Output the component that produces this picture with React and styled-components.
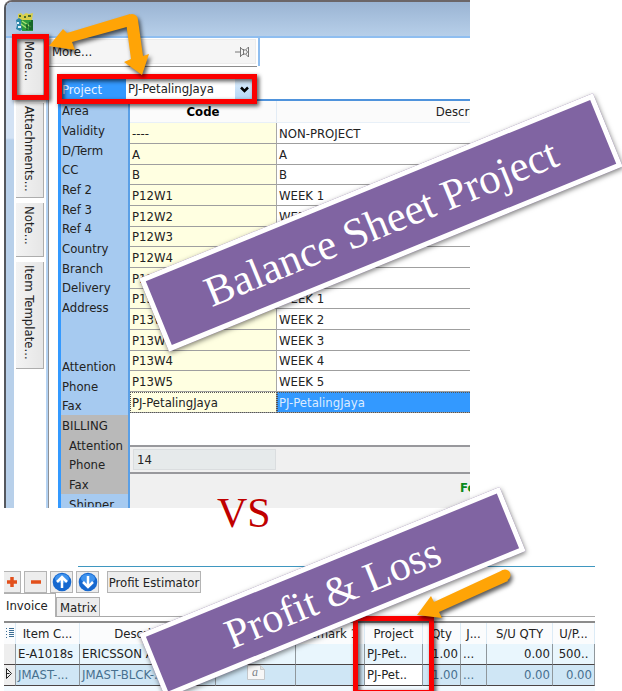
import React from "react";
import styled, { createGlobalStyle } from "styled-components";

const Global = createGlobalStyle`
  * { box-sizing: border-box; }
  body {
    margin: 0;
    background: #fff;
    color: #222;
    font-family: "DejaVu Sans Condensed", "DejaVu Sans", sans-serif;
    font-size: 13px;
  }
  button, select { font: inherit; color: inherit; margin: 0; padding: 0; }
`;

const Page = styled.main`
  position: relative;
  overflow: hidden;
`;

/* ---------- Upper window ---------- */

const Window = styled.section`
  margin: 0 152px 0 4px;
  border-top: 2px solid #6b6668;
  border-left: 2px solid #55585e;
  border-top-left-radius: 8px;
  overflow: hidden;
`;

const TitleBar = styled.header`
  display: flex;
  align-items: center;
  height: 36px;
  padding-left: 9px;
  padding-top: 5px;
  background: linear-gradient(#9ab4d3, #b7cfe9);
  border-bottom: 2px solid #8fbef0;
`;

const WindowBody = styled.div`
  display: flex;
`;

const Frame = styled.div`
  width: 8px;
  flex: none;
  background: linear-gradient(#d3e2f4 0 100px, #b8d0ea 102px);
`;

const SideTabs = styled.nav`
  display: flex;
  flex-direction: column;
  gap: 5px;
  flex: none;
  width: 35px;
  padding-left: 2px;
  border-right: 1px solid #8c9096;
  box-shadow: inset -2px 0 #b4d2f2;
`;

const SideTab = styled.button`
  writing-mode: vertical-rl;
  width: 28px;
  height: ${(p) => p.$length}px;
  padding-top: 3px;
  border: 0 solid #adadad;
  border-width: 0 1px 1px 0;
  background: linear-gradient(90deg, #f3f3f3, #e6e6e6);
  text-align: left;
  line-height: 27px;
  white-space: nowrap;
`;

const Content = styled.div`
  flex: 1;
  min-width: 0;
`;

const PanelHeader = styled.div`
  width: 211px;
  height: 28px;
  padding: 1px 2px 1px 1px;
  border-right: 2px solid #8fbef0;
`;

const PanelTitle = styled.div`
  display: flex;
  align-items: center;
  justify-content: space-between;
  height: 25px;
  padding: 0 5px 0 1px;
  background: #f5f5f5;
  border: 1px solid #ececec;
`;

const PanelRule = styled.hr`
  width: 208px;
  height: 1px;
  margin: 0 0 11px;
  border: 0;
  background: #8c8c8c;
`;

const FieldRow = styled.div`
  display: flex;
  height: 21px;
  width: 196px;
  margin-left: 9px;
  border-top: 1px dotted #222;
`;

const FieldLabel = styled.label`
  width: 68px;
  padding-left: 4px;
  background: #3399ff;
  color: #e8f3ff;
  line-height: 22px;
`;

const Combo = styled.div`
  display: flex;
  position: relative;
  flex: 1;
`;

const ComboSelect = styled.select`
  appearance: none;
  width: 100%;
  border: 0;
  padding-left: 2px;
  background: #fff;
  line-height: 20px;
`;

const ComboArrow = styled.span`
  position: absolute;
  right: 0;
  top: 0;
  display: grid;
  place-items: center;
  width: 19px;
  height: 20px;
  background: linear-gradient(#dcecfb, #b5d8f7);
  pointer-events: none;
`;

const Split = styled.div`
  display: flex;
  margin-left: 9px;
`;

const LabelList = styled.ul`
  flex: none;
  width: 72px;
  margin: 0;
  padding: 1px 0 0;
  list-style: none;
  background: #a6caf0;
  border-left: 3px solid #3399ff;
  border-right: 2px solid #5a9fe6;
`;

const LabelItem = styled.li`
  height: 20px;
  padding-left: ${(p) => (p.$indent ? 8 : 1)}px;
  line-height: 21px;
  overflow: hidden;
  white-space: nowrap;
  background: ${(p) => (p.$group ? "#b9b9b9" : "transparent")};
  &:nth-child(3n) { height: 19px; }
  &:last-child { height: 13px; }
`;

const GridPane = styled.div`
  flex: 1;
  min-width: 0;
  overflow: hidden;
  border-top: 2px solid #4f93dc;
`;

const CodeTable = styled.table`
  width: calc(100% + 192px);
  table-layout: fixed;
  border-collapse: separate;
  border-spacing: 0;
`;

const CodeHead = styled.th`
  width: ${(p) => p.$width || "auto"};
  height: 22px;
  padding: 0;
  background: #fbfbfb;
  border-right: 1px solid #e3ecf5;
  border-bottom: 1px solid #e8f0f8;
  font-weight: ${(p) => (p.$strong ? 700 : 400)};
  color: ${(p) => (p.$strong ? "#000" : "#222")};
`;

const CodeRow = styled.tr`
  height: 21px;
  &:nth-child(3n) { height: 20px; }
`;

const CodeCell = styled.td`
  height: inherit;
  padding: 1px 2px 0;
  line-height: 18px;
  white-space: nowrap;
  border-bottom: 1px solid #9f9f9f;
  border-right: 1px solid #a8a8a8;
  background: ${(p) => (p.$code ? "#ffffe1" : p.$picked ? "#3399ff" : "#fff")};
  color: ${(p) => (p.$picked && !p.$code ? "#dcecff" : "inherit")};
  outline: ${(p) => (p.$picked ? "1px dotted #555" : "none")};
  outline-offset: -1px;
`;

const CountBar = styled.div`
  height: 29px;
  margin-top: 32px;
  padding: 2px 3px;
  background: #f0f0f0;
  border: 0 solid #98989c;
  border-width: 2px 0;
`;

const Count = styled.output`
  display: block;
  width: 143px;
  height: 21px;
  padding-left: 3px;
  line-height: 19px;
  background: #e6eaeb;
  border: 1px solid #dadddf;
`;

const StatusBar = styled.footer`
  display: flex;
  justify-content: flex-end;
  height: 34px;
  background: #f0f0f0;
`;

const Status = styled.strong`
  width: 10px;
  color: #0a8a1c;
  line-height: 28px;
  overflow: hidden;
  white-space: nowrap;
`;

/* ---------- Lower window ---------- */

const Invoice = styled.section`
  margin: 58px 27px 0 4px;
`;

const TopRule = styled.hr`
  height: 1px;
  margin: 0 0 4px 74px;
  border: 0;
  background: #3f97c0;
`;

const Toolbar = styled.div`
  display: flex;
  gap: 3px;
  height: 22px;
`;

const ToolButton = styled.button`
  display: grid;
  place-items: center;
  width: ${(p) => (p.$cut ? 17 : 23)}px;
  height: 22px;
  border: 1px solid #b4b4b4;
  border-left-width: ${(p) => (p.$cut ? 0 : 1)}px;
  background: #ededed;
`;

const TextButton = styled(ToolButton)`
  width: 94px;
  margin-left: 5px;
`;

const Tabs = styled.div`
  display: flex;
  align-items: flex-end;
  height: 24px;
  border-bottom: 1px solid #a9a9a9;
`;

const Tab = styled.button`
  height: ${(p) => (p.$active ? 24 : 19)}px;
  width: ${(p) => (p.$active ? 52 : 44)}px;
  margin-bottom: ${(p) => (p.$active ? -1 : 0)}px;
  border: 1px solid #b0b0b0;
  border-bottom: 0;
  border-left-width: ${(p) => (p.$active ? 0 : 1)}px;
  background: ${(p) => (p.$active ? "#fff" : "#ececec")};
  text-align: left;
  white-space: nowrap;
  padding-left: ${(p) => (p.$active ? 2 : 3)}px;
`;

const LineTable = styled.table`
  width: 100%;
  margin-top: 4px;
  table-layout: fixed;
  border-collapse: separate;
  border-spacing: 0;
  border-top: 2px solid #8b8b8b;
  border-bottom: 6px solid #f2faff;
`;

const LineHead = styled.th`
  width: ${(p) => (p.$width ? `${p.$width}px` : "auto")};
  height: 21px;
  padding: 0;
  font-weight: 400;
  white-space: nowrap;
  background: #fbfcfd;
  border-right: 1px solid #dcebf6;
`;

const LineCell = styled.td`
  height: 21px;
  padding: 0 2px;
  overflow: hidden;
  white-space: nowrap;
  line-height: 18px;
  text-align: ${(p) => p.$align || "left"};
  border-right: 1px solid #8f979c;
  border-bottom: 1px solid #4a4444;
  color: ${(p) => (p.$active && !p.$plain ? "#47708f" : "#222")};
  background: ${(p) =>
    p.$head ? "#eee" : p.$active ? (p.$plain ? "#fff" : "#cfe6f5") : "#e9f6fd"};
`;

/* ---------- Callouts lying over both windows ---------- */

const Banner = styled.h1`
  position: absolute;
  left: ${(p) => p.$x}px;
  top: ${(p) => p.$y}px;
  width: ${(p) => p.$w}px;
  height: ${(p) => p.$h}px;
  margin: 0;
  display: flex;
  align-items: center;
  justify-content: center;
  border: 5px solid #fff;
  background: #8064a2;
  color: #fff;
  box-shadow: 0 2px 5px rgba(0, 0, 0, 0.5);
  font: 400 ${(p) => p.$size}px "Liberation Serif", serif;
  white-space: nowrap;
  transform: rotate(-22.2deg);
`;

const Versus = styled.p`
  position: absolute;
  left: 217px;
  top: 489px;
  margin: 0;
  color: #c00000;
  font: 400 42px/48px "Liberation Serif", serif;
`;

const Highlight = styled.div`
  position: absolute;
  left: ${(p) => p.$x}px;
  top: ${(p) => p.$y}px;
  width: ${(p) => p.$w}px;
  height: ${(p) => p.$h}px;
  border: 5px solid #fb0000;
  filter: drop-shadow(2px 2px 2px rgba(0, 0, 0, 0.7));
`;

const Arrows = styled.svg`
  position: absolute;
  left: 0;
  top: 0;
  pointer-events: none;
  filter: drop-shadow(2px 3px 2px rgba(0, 0, 0, 0.65));
`;

const AppIcon = () => (
  <svg width="20" height="20" viewBox="0 0 20 20" aria-hidden="true">
    <path d="M3 2l3-1 2 2 3-2 3 1 4-1-1 7H3z" fill="#d8cf4a" />
    <path d="M4 3h2v2H4zM9 4h2v2H9zM13 3h3v2h-3z" fill="#4b6b2c" />
    <path d="M1 8l3-2 3 2-1 4 2 5-3 2-4-2 1-4z" fill="#2e86a8" />
    <path d="M2 10h2v2H2zM3 14h3v2H3z" fill="#e6f5fb" />
    <path d="M6 8h12v11H7z" fill="#2c9a3d" />
    <path d="M7 9l9 6M6 12l7 5" stroke="#a6e070" strokeWidth="1.5" />
    <path d="M12 12v6M15 10v8M17 8v10" stroke="#0d4d20" strokeWidth="1.3" />
  </svg>
);

const PinIcon = () => (
  <svg width="15" height="12" viewBox="0 0 15 12" fill="none" stroke="#777" aria-hidden="true">
    <path d="M0 6h5M5.5 1v10M8.500 3v6M5.500 2l3 2h2l3-3v10l-3-3h-2l-3 2M11 4l1.500 2L11 8" />
  </svg>
);

const CircleArrow = ({ down }) => (
  <svg width="20" height="20" viewBox="0 0 20 20" aria-hidden="true">
    <circle cx="10" cy="10" r="9.300" fill="#1668cf" />
    <ellipse cx="10" cy="6.500" rx="7" ry="4.500" fill="#3f93ee" />
    <path
      d={down ? "M10 4v11M5 10l5 5 5-5" : "M10 16V5M5 10l5-5 5 5"}
      fill="none"
      stroke="#fff"
      strokeWidth="2.500"
    />
  </svg>
);

const NoteIcon = () => (
  <svg width="18" height="15" viewBox="0 0 18 15" aria-hidden="true">
    <path d="M.5.5h13l4 4v10H.5z" fill="#f7f7f7" stroke="#c4c8cb" />
    <path d="M13.500.5v4h4" fill="#ddd" stroke="#c4c8cb" />
    <text x="5" y="11" fontSize="12" fontStyle="italic" fontFamily="Liberation Serif, serif" fill="#7d8388">a</text>
  </svg>
);

const sideTabs = [["More...", 60], ["Attachments...", 95], ["Note...", 54], ["Item Template...", 107]];

const labels = [
  ["Area"], ["Validity"], ["D/Term"], ["CC"], ["Ref 2"], ["Ref 3"], ["Ref 4"],
  ["Country"], ["Branch"], ["Delivery"], ["Address"], [""], [""],
  ["Attention"], ["Phone"], ["Fax"], ["BILLING", true, false],
  ["Attention", true, true], ["Phone", true, true], ["Fax", true, true],
  ["Shipper", false, true],
];

const projects = [
  ["----", "NON-PROJECT"], ["A", "A"], ["B", "B"],
  ["P12W1", "WEEK 1"], ["P12W2", "WEEK 2"], ["P12W3", "WEEK 3"], ["P12W4", "WEEK 4"], ["P12W5", "WEEK 5"],
  ["P13W1", "WEEK 1"], ["P13W2", "WEEK 2"], ["P13W3", "WEEK 3"], ["P13W4", "WEEK 4"], ["P13W5", "WEEK 5"],
  ["PJ-PetalingJaya", "PJ-PetalingJaya"],
];

const lineColumns = [
  ["Item C...", 64], ["Description", 0], ["", 80], ["Remark 1", 69], ["Project", 58],
  ["Qty", 38], ["J...", 26], ["S/U QTY", 66], ["U/P...", 42],
];

const lines = [
  ["E-A1018s", "ERICSSON A1018s", "PJ-Pet..", "1.00", "...", "0.00", "500.."],
  ["JMAST-...", "JMAST-BLCK-...", "PJ-Pet..", "1.00", "...", "0.00", "0.00"],
];

export default function App() {
  return (
    <Page>
      <Global />
      <Window>
        <TitleBar><AppIcon /></TitleBar>
        <WindowBody>
          <Frame />
          <SideTabs>
            {sideTabs.map(([name, length]) => (
              <SideTab key={name} $length={length}>{name}</SideTab>
            ))}
          </SideTabs>
          <Content>
            <PanelHeader>
              <PanelTitle>More...<PinIcon /></PanelTitle>
            </PanelHeader>
            <PanelRule />
            <FieldRow>
              <FieldLabel htmlFor="project">Project</FieldLabel>
              <Combo>
                <ComboSelect id="project" defaultValue="PJ-PetalingJaya">
                  {projects.map(([code]) => <option key={code}>{code}</option>)}
                </ComboSelect>
                <ComboArrow>
                  <svg width="9" height="7" viewBox="0 0 9 7" fill="none" stroke="#000" strokeWidth="2.500">
                    <path d="M1 1.500l3.500 3.500L8 1.500" />
                  </svg>
                </ComboArrow>
              </Combo>
            </FieldRow>
            <Split>
              <LabelList>
                {labels.map(([text, group, indent], i) => (
                  <LabelItem key={i} $group={group} $indent={indent}>{text}</LabelItem>
                ))}
              </LabelList>
              <GridPane>
                <CodeTable>
                  <thead>
                    <tr>
                      <CodeHead $width="147px" $strong>Code</CodeHead>
                      <CodeHead>Description</CodeHead>
                    </tr>
                  </thead>
                  <tbody>
                    {projects.map(([code, text], i) => {
                      const picked = i === projects.length - 1;
                      return (
                        <CodeRow key={code}>
                          <CodeCell $code $picked={picked}>{code}</CodeCell>
                          <CodeCell $picked={picked}>{text}</CodeCell>
                        </CodeRow>
                      );
                    })}
                  </tbody>
                </CodeTable>
                <CountBar><Count>14</Count></CountBar>
                <StatusBar><Status>Fe</Status></StatusBar>
              </GridPane>
            </Split>
          </Content>
        </WindowBody>
      </Window>

      <Invoice>
        <TopRule />
        <Toolbar>
          <ToolButton $cut aria-label="Add line">
            <svg width="12" height="12" viewBox="0 0 12 12"><path d="M6 1v10M1 6h10" stroke="#e2501c" strokeWidth="3.500" /></svg>
          </ToolButton>
          <ToolButton aria-label="Remove line">
            <svg width="12" height="12" viewBox="0 0 12 12"><path d="M1 6h10" stroke="#e2501c" strokeWidth="3.500" /></svg>
          </ToolButton>
          <ToolButton aria-label="Move up"><CircleArrow /></ToolButton>
          <ToolButton aria-label="Move down"><CircleArrow down /></ToolButton>
          <TextButton>Profit Estimator</TextButton>
        </Toolbar>
        <Tabs>
          <Tab $active>Invoice</Tab>
          <Tab>Matrix</Tab>
        </Tabs>
        <LineTable>
          <thead>
            <tr>
              <LineHead $width={12}>
                <svg width="8" height="11" viewBox="0 0 8 11" stroke="#3a6d94" aria-hidden="true">
                  <path d="M0 1.500h1M0 4.500h1M0 7.500h1M0 10.500h1M3 1.500h5M3 3.500h5M3 5.500h5M3 7.500h5M3 9.500h5" />
                </svg>
              </LineHead>
              {lineColumns.map(([name, width], i) => (
                <LineHead key={i} $width={width}>{name}</LineHead>
              ))}
            </tr>
          </thead>
          <tbody>
            {lines.map(([code, text, project, qty, job, suQty, price], i) => {
              const active = i === 1;
              return (
                <tr key={code}>
                  <LineCell $head>
                    {active && (
                      <svg width="7" height="11" viewBox="0 0 7 11" fill="none" stroke="#222">
                        <path d="M.5.5l5 5-5 5zM.5 5.500h3" />
                      </svg>
                    )}
                  </LineCell>
                  <LineCell $active={active}>{code}</LineCell>
                  <LineCell $active={active}>{text}</LineCell>
                  <LineCell $active={active} $align="center"><NoteIcon /></LineCell>
                  <LineCell $active={active} />
                  <LineCell $active={active} $plain>{project}</LineCell>
                  <LineCell $active={active} $align="right">{qty}</LineCell>
                  <LineCell $active={active}>{job}</LineCell>
                  <LineCell $active={active} $align="right">{suQty}</LineCell>
                  <LineCell $active={active} $align={active ? "right" : "center"}>{price}</LineCell>
                </tr>
              );
            })}
          </tbody>
        </LineTable>
      </Invoice>

      <Highlight $x={12} $y={34} $w={37} $h={66} />
      <Highlight $x={57} $y={74} $w={200} $h={30} />
      <Highlight $x={353} $y={616} $w={81} $h={79} />
      <Arrows width="622" height="691" viewBox="0 0 622 691" fill="#ffa406">
        <path d="M130 14L67 33l-4-4-14 17 26 4-3-8 62-17z" />
        <path d="M126 22l5 37-7 3 18 13 7-21-6 2-5-36z" />
        <circle cx="132" cy="20" r="6" />
        <path d="M503 570l-69 32-3-6-14 19 25 3-3-6 69-31z" />
        <circle cx="505" cy="575" r="5.500" />
      </Arrows>
      <Banner $x={136} $y={183} $w={490} $h={79} $size={43}>Balance Sheet Project</Banner>
      <Versus>VS</Versus>
      <Banner $x={138} $y={558} $w={389} $h={69} $size={42}>Profit &amp; Loss</Banner>
    </Page>
  );
}
